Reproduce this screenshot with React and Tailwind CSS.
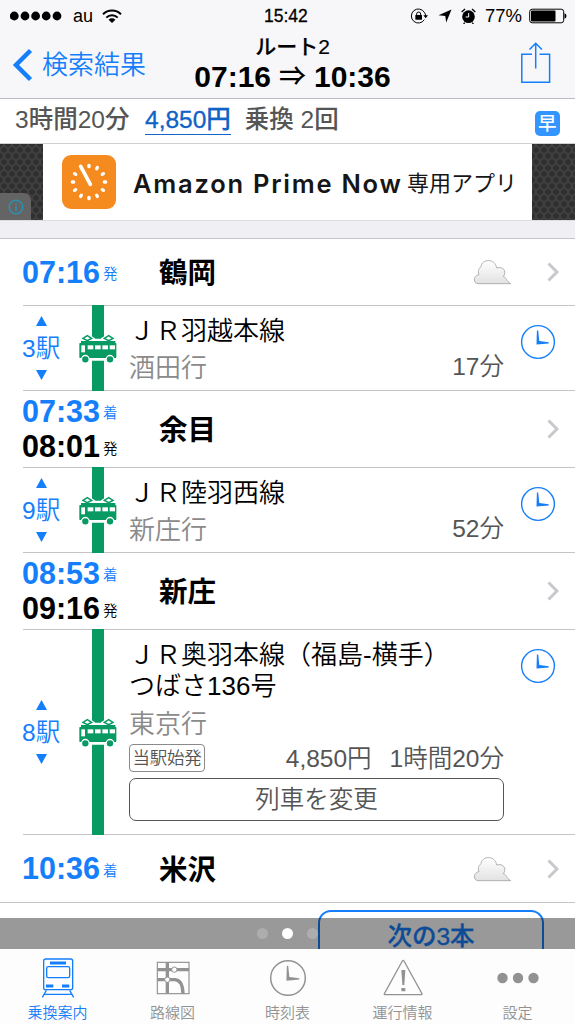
import React from 'react';

const BLUE = '#157efb';

function Chevron() {
  return (
    <svg className="h-[20px] w-[12px]" viewBox="0 0 12 20" fill="none" stroke="#c7c7cc" strokeWidth="3">
      <path d="M1.500 1.500L10 10L1.500 18.500" />
    </svg>
  );
}

function Cloud() {
  return (
    <svg className="h-[26px] w-[39px]" viewBox="219 57 117 78">
      <defs>
        <linearGradient id="cloud" x1="0" y1="0" x2="0" y2="1">
          <stop offset="0" stopColor="#ffffff" />
          <stop offset="1" stopColor="#e2e2e2" />
        </linearGradient>
      </defs>
      <path
        d="M234 131C219 130 219 106 237 104C232 91 238 84 243 80C246 55 286 55 290 84C309 78 322 94 310 110C320 112 318 123 332 131Z"
        fill="url(#cloud)"
        stroke="#999"
        strokeWidth="2.200"
      />
    </svg>
  );
}

function Clock({ color, size }) {
  return (
    <svg width={size} height={size} viewBox="0 0 36 36">
      <circle cx="18" cy="18" r="16.400" fill="none" stroke={color} strokeWidth="1.400" />
      <path d="M16.900 6.500h1.300l1.100 10.600 9.400 1.100v1.300l-12.200 1.100z" fill={color} />
    </svg>
  );
}

function Tram() {
  return (
    <svg className="h-[30px] w-[38px]" viewBox="-1 -2 114 90">
      <path d="M34 12H78V20H34ZM34 66H78V78H34Z" fill="#fff" />
      <g fill="#fff" stroke="#fff" strokeWidth="11">
        <path d="M11 11L24 3L37 11L24 18Z" />
        <path d="M75 11L88 3L101 11L88 18Z" />
      </g>
      <g fill="#fff" stroke="#079a63" strokeWidth="4.500">
        <path d="M11 11L24 3L37 11L24 18Z" />
        <path d="M75 11L88 3L101 11L88 18Z" />
      </g>
      <rect x="5" y="19" width="103" height="8" fill="#079a63" />
      <rect x="0" y="25" width="111" height="45" rx="2" fill="#079a63" />
      <g fill="#fff">
        <rect x="6" y="32" width="11" height="21" />
        <rect x="25" y="32" width="17" height="12" />
        <rect x="47" y="32" width="17" height="12" />
        <rect x="69" y="32" width="17" height="12" />
        <rect x="91" y="32" width="16" height="12" />
      </g>
      <g fill="#079a63" stroke="#fff" strokeWidth="4">
        <circle cx="18" cy="74" r="11.500" />
        <circle cx="92" cy="74" r="11.500" />
      </g>
    </svg>
  );
}

function Time({ value, mark, dark }) {
  return (
    <div className={`flex h-[35.500px] items-center ${dark ? 'text-black' : 'text-[#157efb]'}`}>
      <span className="w-[81px] text-[30.500px] leading-[35px] font-bold">{value}</span>
      <span className="pt-[4px] text-[14.500px] leading-[20px] font-[350]">{mark}</span>
    </div>
  );
}

function Station({ name, arrive, depart, last, first, cloud }) {
  return (
    <div
      className={`flex shrink-0 items-center ${
        first ? 'h-[66px]' : last ? 'h-[67px]' : 'h-[76px]'
      } pr-[16px] pl-[22px]`}
    >
      <div className="w-[137px]">
        {arrive && <Time value={arrive} mark="着" />}
        {depart && <Time value={depart} mark="発" dark={!first} />}
      </div>
      <div className="grow pt-[2px] text-[28.500px] leading-[40px] font-bold text-black">{name}</div>
      {cloud && (
        <div className="mr-[35px]">
          <Cloud />
        </div>
      )}
      <Chevron />
    </div>
  );
}

function Rule() {
  return <div className="ml-[23px] h-px shrink-0 bg-[#c4c4c4]" />;
}

function Segment({ stops, height, children }) {
  return (
    <div className={`relative flex shrink-0 ${height}`}>
      <div className="flex w-[79px] flex-col items-start justify-center pl-[22px] text-[#157efb]">
        <svg className="ml-[14px] h-[10px] w-[11px]" viewBox="0 0 11 10">
          <path d="M5.500 0L11 10H0Z" fill={BLUE} />
        </svg>
        <div className="mt-[9px] mb-[7px] text-[24.500px] leading-[28px] font-[350]">{stops}駅</div>
        <svg className="ml-[14px] h-[10px] w-[11px]" viewBox="0 0 11 10">
          <path d="M0 0H11L5.500 10Z" fill={BLUE} />
        </svg>
      </div>
      <div className="-my-px flex w-[38px] items-center justify-center bg-[linear-gradient(#079a63,#079a63)] bg-[length:12px_100%] bg-[position:13px_0] bg-no-repeat pt-[1px]">
        <Tram />
      </div>
      <div className="ml-[12px] flex w-[375px] shrink-0 flex-col pt-[10px]">{children}</div>
      <div className="ml-[16px] pt-[18px]">
        <Clock color={BLUE} size={36} />
      </div>
    </div>
  );
}

function LineName({ children }) {
  return <div className="h-[31px] text-[26px] leading-[31px] font-[350] whitespace-nowrap text-black">{children}</div>;
}

function Ride({ line, bound, time }) {
  return (
    <>
      <LineName>{line}</LineName>
      <div className="mt-[2px] flex h-[38px] items-center justify-between font-[350] whitespace-nowrap">
        <span className="text-[26px] leading-[38px] text-[#8a8a8a]">{bound}</span>
        <span className="pb-[2px] text-[24.500px] leading-[34px] text-[#555]">{time}</span>
      </div>
    </>
  );
}

function AdEdge({ className, children }) {
  return (
    <div
      className={`relative h-full bg-[#404040] bg-[radial-gradient(circle,#2f2f2f_2.4px,transparent_3.2px),radial-gradient(circle,#2f2f2f_2.4px,transparent_3.2px)] bg-[length:8px_12px] bg-[position:0_0,4px_6px] ${className}`}
    >
      {children}
    </div>
  );
}

function AdLogo() {
  const ticks = [0, 30, 60, 90, 120, 150, 180, 210, 240, 270, 300];
  return (
    <svg className="h-[54px] w-[54px]" viewBox="0 0 162 162">
      <rect width="162" height="162" rx="27" fill="#f58a1f" />
      <g stroke="#fff" strokeWidth="10" strokeLinecap="round">
        {ticks.map((a) => (
          <path key={a} d="M81 31v4" transform={`rotate(${a} 81 81)`} />
        ))}
        <path d="M56 34L85 88" strokeWidth="11" />
      </g>
    </svg>
  );
}

function Tab({ label, active, children }) {
  return (
    <div className={`flex w-[115px] flex-col items-center pt-[7px] ${active ? 'text-[#157efb]' : 'text-[#929292]'}`}>
      <div className="flex h-[44px] items-center justify-center">{children}</div>
      <div className="mt-[3px] text-[15px] leading-[20px] font-[350]">{label}</div>
    </div>
  );
}

export default function App() {
  return (
    <div
      lang="ja"
      className="flex h-[1024px] w-[575px] flex-col overflow-hidden bg-white font-['Liberation_Sans','Noto_Sans_CJK_JP',sans-serif]"
    >
      <header className="h-[99px] shrink-0 border-b border-[#bcbcc0] bg-[#f7f7f9] text-black">
        <div className="flex h-[32px] items-center">
          <div className="flex w-[264px] items-center pl-[10px]">
            <svg className="h-[10px] w-[52px]" viewBox="0 0 52 10">
              {[4.3, 15, 25.6, 36.2, 47].map((x) => (
                <circle key={x} cx={x} cy="5" r="4.400" />
              ))}
            </svg>
            <span className="ml-[11px] text-[18px] leading-[32px]">au</span>
            <svg className="ml-[9px] h-[15px] w-[20px]" viewBox="0 0 20 15" fill="none" stroke="#000" strokeWidth="2">
              <path d="M1 5.200a12.700 12.700 0 0 1 18 0" />
              <path d="M4.300 8.600a8 8 0 0 1 11.400 0" />
              <path d="M10 14L6.600 10.700a4.800 4.800 0 0 1 6.800 0z" fill="#000" stroke="none" />
            </svg>
          </div>
          <span className="w-[146px] text-[17.500px] leading-[32px] [-webkit-text-stroke:0.3px_black]">15:42</span>
          <svg className="h-[16px] w-[18px]" viewBox="0 0 54 48">
            <path d="M43 13A21 21 0 1 0 43 35" fill="none" stroke="#000" strokeWidth="3" />
            <path d="M43 13Q47 18 47 24" fill="none" stroke="#000" strokeWidth="3" />
            <path d="M40 22H54L47 31Z" />
            <rect x="16" y="21" width="20" height="14" rx="1" />
            <path d="M20 22v-4a6 6 0 0 1 12 0v4" fill="none" stroke="#000" strokeWidth="3" />
          </svg>
          <svg className="ml-[10px] h-[14px] w-[14px]" viewBox="0 0 14 14">
            <path d="M13.500 .5L8.200 13.500L7.300 7L.5 6.200Z" />
          </svg>
          <svg className="ml-[9px] h-[16px] w-[15px]" viewBox="0 0 45 48">
            <circle cx="22.500" cy="26" r="19" />
            <path d="M2 12L12 3M43 12L33 3" stroke="#000" strokeWidth="4" />
            <path d="M11 44L8 48M34 44L37 48" stroke="#000" strokeWidth="4" />
            <path d="M23 15V27H14" fill="none" stroke="#fff" strokeWidth="3" />
          </svg>
          <span className="ml-[9px] w-[44px] text-[18.500px] leading-[32px]">77%</span>
          <svg className="h-[16px] w-[38px]" viewBox="0 0 38 16">
            <rect x=".7" y="1.200" width="34" height="13.600" rx="2.500" fill="none" stroke="#000" strokeWidth="1" />
            <rect x="2" y="2.500" width="24.500" height="11" rx="1" />
            <path d="M35.500 5.200q2 .8 2 2.800t-2 2.800z" />
          </svg>
        </div>
        <div className="flex h-[66px]">
          <div className="flex w-[185px] items-center pl-[12px] text-[26px] leading-[40px] font-[350] text-[#157efb]">
            <svg className="mr-[9px] h-[34px] w-[21px]" viewBox="0 0 21 34" fill="none" stroke={BLUE} strokeWidth="4.500">
              <path d="M18.500 2.500L4 17L18.500 31.500" />
            </svg>
            <span className="whitespace-nowrap">検索結果</span>
          </div>
          <div className="flex w-[215px] flex-col items-center pt-[2px]">
            <div className="text-[21px] leading-[26px] font-medium [-webkit-text-stroke:0.2px_black]">ルート2</div>
            <div className="flex items-center text-[30px] leading-[34px] font-bold whitespace-pre">
              <span>07:16</span>
              <span className="mx-[8px] text-[27px] font-medium">⇒</span>
              <span>10:36</span>
            </div>
          </div>
          <svg className="mt-[10px] ml-[120px] h-[43px] w-[32px]" viewBox="0 0 32 43" fill="none" stroke={BLUE} strokeWidth="1.500">
            <path d="M12 12.200H1.800V40.300H29.600V12.200H19.500" />
            <path d="M15.700 26.500V1.500M9.500 7.500L15.700 1.300L21.900 7.500" />
          </svg>
        </div>
      </header>

      <div className="flex h-[44px] shrink-0 items-start pt-[6.500px] pl-[15px] text-[24.500px] leading-[28px] font-medium whitespace-nowrap text-[#555]">
        <span className="w-[130px]">3時間20分</span>
        <span className="border-b border-[#1565c8] text-[#1062c6] [-webkit-text-stroke:0.3px_#1062c6]">4,850円</span>
        <span className="ml-[14px] w-[290px]">乗換 2回</span>
        <span className="mt-[5px] flex h-[25px] w-[25px] items-center justify-center rounded-[5px] bg-[#3395ff] text-[18.500px] leading-[25px] font-medium text-white">
          <span className="pt-[1px]">早</span>
        </span>
      </div>

      <div className="flex h-[78px] shrink-0 border-t border-b border-t-[#cfcfcf] border-b-[#dcdce0] bg-white">
        <AdEdge className="w-[43px]">
          <div className="absolute bottom-0 left-0 flex h-[27px] w-[31px] items-center rounded-tr-[7px] bg-[#646464] pl-[8px]">
            <svg className="h-[16px] w-[16px]" viewBox="0 0 16 16" fill="none" stroke="#2f8fb0" strokeWidth="1.500">
              <circle cx="8" cy="8" r="6.800" />
              <path d="M8 7v5M8 4v1.500" />
            </svg>
          </div>
        </AdEdge>
        <div className="flex w-[489px] items-center pl-[19px] text-[#161616]">
          <AdLogo />
          <span className="ml-[17px] w-[274px] pt-[3px] font-['Inter'] text-[25.500px] leading-[40px] font-semibold tracking-[1.750px] whitespace-nowrap">
            Amazon Prime Now
          </span>
          <span className="pt-[4px] text-[22px] leading-[40px] font-normal whitespace-nowrap">専用アプリ</span>
        </div>
        <AdEdge className="w-[43px]" />
      </div>

      <div className="h-[18px] shrink-0 border-b border-[#c4c4c8] bg-[#efeff4]" />

      <main className="flex shrink-0 flex-col bg-white">
        <Station name="鶴岡" depart="07:16" first cloud />
        <Rule />
        <Segment stops="3" height="h-[84px]">
          <Ride line="ＪＲ羽越本線" bound="酒田行" time="17分" />
        </Segment>
        <Rule />
        <Station name="余目" arrive="07:33" depart="08:01" />
        <Rule />
        <Segment stops="9" height="h-[84px]">
          <Ride line="ＪＲ陸羽西線" bound="新庄行" time="52分" />
        </Segment>
        <Rule />
        <Station name="新庄" arrive="08:53" depart="09:16" />
        <Rule />
        <Segment stops="8" height="h-[204px]">
          <LineName>ＪＲ奥羽本線（福島-横手）</LineName>
          <LineName>つばさ136号</LineName>
          <div className="mt-[4px] text-[26px] leading-[36px] font-[350] text-[#8a8a8a]">東京行</div>
          <div className="mt-[2px] flex h-[28px] items-center font-[350] whitespace-nowrap text-[#555]">
            <span className="flex h-[28px] w-[76px] items-center justify-center rounded-[4px] border border-[#8a8a8a] text-[17.500px] leading-[24px] tracking-[-0.200px]">
              当駅始発
            </span>
            <span className="ml-auto pt-[2px] text-[24.500px] leading-[30px]">4,850円</span>
            <span className="ml-[18px] pt-[2px] text-[24.500px] leading-[30px]">1時間20分</span>
          </div>
          <div className="mt-[6px] flex h-[43px] items-center justify-center rounded-[7px] border-[1.500px] border-[#555] pt-[1px] text-[24.500px] leading-[30px] font-[350] text-[#555]">
            列車を変更
          </div>
        </Segment>
        <Rule />
        <Station name="米沢" arrive="10:36" last cloud />
      </main>

      <div className="relative h-[47px] shrink-0 overflow-hidden border-t border-[#c4c4c4] bg-white">
        <div className="mt-[7px] ml-[318px] flex h-[39px] w-[226px] items-start justify-center rounded-t-[13px] border-2 border-b-0 border-[#157efb] pt-[13px] text-[24.500px] leading-[24px] font-medium text-[#157efb]">
          <span className="[-webkit-text-stroke:0.3px_#157efb]">次の3本</span>
        </div>
        <div className="absolute inset-x-0 bottom-0 flex h-[31px] items-center justify-center gap-[14px] bg-black/40">
          <span className="h-[11px] w-[11px] rounded-full bg-white/20" />
          <span className="h-[11px] w-[11px] rounded-full bg-white" />
          <span className="h-[11px] w-[11px] rounded-full bg-white/20" />
        </div>
      </div>

      <nav className="flex h-[75px] shrink-0 bg-[#fdfdfd]">
        <Tab label="乗換案内" active>
          <svg className="h-[40px] w-[34px]" viewBox="123 382 102 120" fill="none" stroke={BLUE} strokeWidth="4">
            <rect x="131" y="385" width="87" height="92" rx="6" />
            <rect x="140" y="408" width="69" height="33" rx="5" />
            <path d="M150 397H198" strokeWidth="9" />
            <path d="M138 466H160M186 466H208" strokeWidth="9" />
            <path d="M139 479L127 500M209 479L221 500M133 491H215" />
          </svg>
        </Tab>
        <Tab label="路線図">
          <svg className="h-[34px] w-[34px]" viewBox="467 390 102 102" fill="none" stroke="#929292">
            <rect x="471" y="394" width="95" height="94" strokeWidth="3.500" />
            <path d="M501 394V488M471 416H566M471 446H524Q547 448 548 488" strokeWidth="10" />
            <circle cx="522" cy="416" r="8" fill="#fff" strokeWidth="3" />
            <circle cx="501" cy="446" r="8" fill="#fff" strokeWidth="3" />
          </svg>
        </Tab>
        <Tab label="時刻表">
          <Clock color="#929292" size={38} />
        </Tab>
        <Tab label="運行情報">
          <svg className="h-[38px] w-[40px]" viewBox="286 384 120 114" fill="none" stroke="#929292" strokeWidth="4">
            <path d="M344 390Q346.500 386 349 390L403 488Q404 491 400 491H293Q289 491 290 488Z" />
            <path d="M341 417H353L350 462H344ZM341 471H353V481H341Z" fill="#929292" stroke="none" />
          </svg>
        </Tab>
        <Tab label="設定">
          <svg className="h-[12px] w-[42px]" viewBox="0 0 42 12" fill="#929292">
            <circle cx="5.500" cy="6" r="5.200" />
            <circle cx="21" cy="6" r="5.200" />
            <circle cx="36.500" cy="6" r="5.200" />
          </svg>
        </Tab>
      </nav>
    </div>
  );
}
